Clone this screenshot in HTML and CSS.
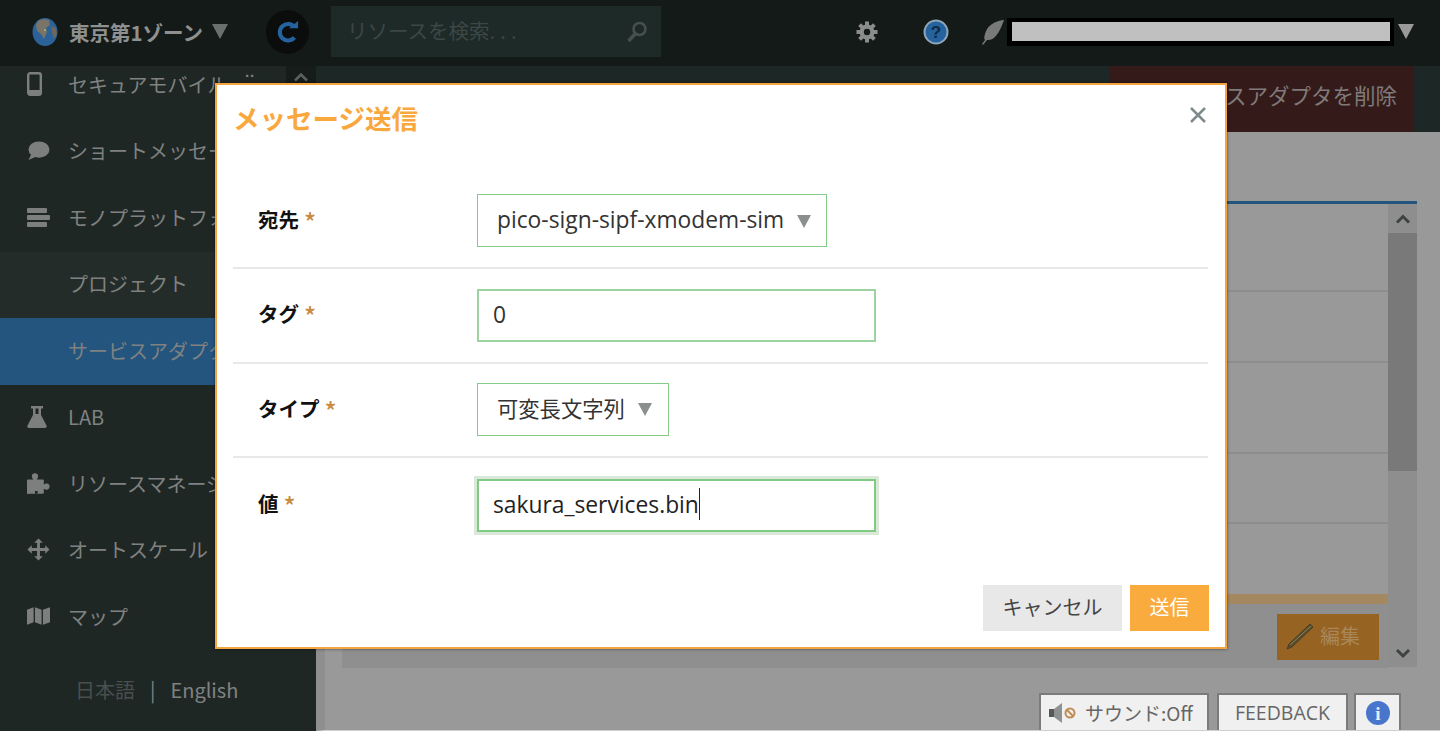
FILE: index.html
```html
<!DOCTYPE html>
<html lang="ja">
<head>
<meta charset="utf-8">
<title>メッセージ送信</title>
<link rel="stylesheet" href="styles.css">
</head>
<body>
<div class="app">
  <header class="topbar">
    <div class="zone">
      <svg class="globe" width="26" height="28" viewBox="0 0 26 28"><ellipse cx="13" cy="14" rx="12.5" ry="14" fill="#2a6299"/><path d="M6 3c3-2 8-2 11-1l1 5-4 3 1 4-3 7-3-5-4-3-1-6z" fill="#7a7468"/><path d="M19 8l5 2 1 6-3 5-2-6z" fill="#6e675c"/><circle cx="13" cy="12" r="1" fill="#9fc36a"/></svg>
      <span class="zone-name">東京第1ゾーン</span>
      <span class="caret zone-caret"></span>
    </div>
    <div class="reload">
      <svg width="22" height="24" viewBox="0 0 24 26"><path d="M19 7.5A9 9 0 1 0 19 19" fill="none" stroke="#25639e" stroke-width="4.5"/><path d="M13 9h10V1z" fill="#25639e"/></svg>
    </div>
    <div class="search">
      <span class="search-text">リソースを検索<span class="dots">...</span></span>
      <svg width="24" height="24" viewBox="0 0 24 24"><circle cx="14.5" cy="9" r="6" fill="none" stroke="#47504e" stroke-width="2.5"/><path d="M10.5 13.5 3.5 21" stroke="#47504e" stroke-width="3.5"/></svg>
    </div>
    <div class="top-right">
      <svg class="gear" width="24" height="24" viewBox="0 0 24 24"><g fill="#8b8d8c"><circle cx="12" cy="12" r="7.5"/><rect x="10" y="1.5" width="4" height="21"/><rect x="10" y="1.5" width="4" height="21" transform="rotate(45 12 12)"/><rect x="10" y="1.5" width="4" height="21" transform="rotate(90 12 12)"/><rect x="10" y="1.5" width="4" height="21" transform="rotate(135 12 12)"/></g><circle cx="12" cy="12" r="3.2" fill="#141a17"/></svg>
      <svg class="help" width="26" height="26" viewBox="0 0 26 26"><circle cx="13" cy="13" r="11.5" fill="#25639e" stroke="#8ea3b8" stroke-width="2"/><text x="13" y="19" text-anchor="middle" class="help-mark">?</text></svg>
      <svg class="feather" width="24" height="26" viewBox="0 0 24 26"><path d="M23 1C13 2 6 7 4 15c-1 3-1 5 0 6l-3 4 1 1 4-5c6 1 12-5 17-20z" fill="#777a79"/></svg>
      <div class="account"><div class="account-mask"></div></div>
      <span class="caret account-caret"></span>
    </div>
  </header>

  <div class="body">
    <nav class="sidebar">
      <div class="side-scroll"><svg width="16" height="10" viewBox="0 0 16 10"><path d="M2 8.500 8 2.500l6 6" fill="none" stroke="#5b5f5e" stroke-width="2.500"/></svg></div>
      <ul class="nav">
        <li class="nav-item"><span class="nav-icon"><svg width="15" height="24" viewBox="0 0 15 24"><rect x="1.200" y="1.200" width="12.600" height="21.600" rx="2" fill="none" stroke="#7c7f7e" stroke-width="2.400"/><rect x="1" y="18" width="13" height="5" fill="#7c7f7e"/></svg></span>セキュアモバイル<span class="nav-more">¨</span></li>
        <li class="nav-item"><span class="nav-icon"><svg width="23" height="21" viewBox="0 0 24 22"><ellipse cx="12.500" cy="10" rx="11" ry="8.500" fill="#7c7f7e"/><path d="M5 14 1.500 21l9-4z" fill="#7c7f7e"/></svg></span>ショートメッセージ</li>
        <li class="nav-item"><span class="nav-icon"><svg width="23" height="21" viewBox="0 0 23 21"><g fill="#7c7f7e"><rect x="0" y="1" width="20" height="5" rx="1"/><rect x="0" y="8" width="23" height="5" rx="1"/><rect x="0" y="15" width="20" height="5" rx="1"/></g></svg></span>モノプラットフォーム</li>
        <li class="nav-item is-open"><span class="nav-icon"></span>プロジェクト</li>
        <li class="nav-item is-active"><span class="nav-icon"></span>サービスアダプタ</li>
        <li class="nav-item"><span class="nav-icon"><svg width="20" height="24" viewBox="0 0 20 24"><path d="M4 1h12v2.500h-2V10l5.500 10.500c.6 1.500 0 2.500-1.500 2.500H2c-1.500 0-2.100-1-1.500-2.500L6 10V3.500H4z" fill="#7c7f7e"/><path d="M8.500 3.500h3V9h-3z" fill="#1f2725"/></svg></span>LAB</li>
        <li class="nav-item"><span class="nav-icon"><svg width="26" height="23" viewBox="0 0 26 23"><g fill="#7c7f7e"><rect x="0" y="7" width="19" height="16" rx="1"/><circle cx="9" cy="3.500" r="3.500"/><rect x="7" y="4" width="4" height="4"/><circle cx="22" cy="15" r="3.500"/><rect x="18" y="13" width="4" height="4"/></g><rect x="0" y="19" width="3" height="4" fill="#7c7f7e"/><rect x="9" y="20" width="3" height="3" fill="#1f2725"/></svg></span>リソースマネージャー</li>
        <li class="nav-item"><span class="nav-icon"><svg width="23" height="23" viewBox="0 0 24 24"><path d="M12 .5l4.500 4.500h-3v5.500H19V7.500l4.500 4.500-4.500 4.500v-3h-5.500V19h3L12 23.500 7.500 19h3v-5.500H5v3L.5 12 5 7.500v3h5.500V5h-3z" fill="#7c7f7e"/></svg></span>オートスケール</li>
        <li class="nav-item"><span class="nav-icon"><svg width="26" height="22" viewBox="0 0 26 22"><path d="M0 4l7.500-3v17L0 21zM9 1l7.500 3v17L9 18zM18 4l8-3v17l-8 3z" fill="#7c7f7e"/></svg></span>マップ</li>
      </ul>
      <div class="lang"><span class="lang-off">日本語</span><span class="lang-sep">|</span><span>English</span></div>
    </nav>

    <main class="main">
      <div class="action-strip"><button class="danger" type="button">サービスアダプタを削除</button></div>
      <section class="panel">
        <div class="panel-col">
          <div class="rows">
            <div class="row r1"></div>
            <div class="row r2"></div>
            <div class="row r3"></div>
            <div class="row r4"></div>
            <div class="row r5"></div>
          </div>
          <div class="panel-foot">
            <button class="edit" type="button"><svg width="28" height="28" viewBox="0 0 28 28"><path d="M24 2l3 3L6 25l-5 2 2-5z" fill="#5e4a2a" stroke="#3c372c" stroke-width=".8"/><path d="M4 23 25 4" stroke="#7d8a52" stroke-width="1"/></svg><span>編集</span></button>
          </div>
        </div>
        <div class="panel-scroll">
          <svg class="sb-arrow" width="16" height="12" viewBox="0 0 16 12"><path d="M2 10l6-6 6 6" fill="none" stroke="#3e4241" stroke-width="3"/></svg>
          <div class="sb-thumb"></div>
          <div class="sb-rest"></div>
          <svg class="sb-arrow down" width="16" height="12" viewBox="0 0 16 12"><path d="M2 2l6 6 6-6" fill="none" stroke="#3e4241" stroke-width="3"/></svg>
        </div>
      </section>
      <div class="tools">
        <button class="tool sound" type="button"><svg width="28" height="24" viewBox="0 0 28 24"><path d="M1 8h5l8-6v20l-8-6H1z" fill="#8d9191"/><rect x="1" y="8" width="5" height="8" fill="#55595a"/><circle cx="22" cy="12" r="4.500" fill="none" stroke="#c08c55" stroke-width="2"/><path d="M19 9l6 6" stroke="#c08c55" stroke-width="2"/></svg><span>サウンド:Off</span></button>
        <button class="tool feedback" type="button">FEEDBACK</button>
        <button class="tool info" type="button"><svg width="24" height="24" viewBox="0 0 24 24"><circle cx="12" cy="12" r="12" fill="#4876cc"/><text x="12" y="19" text-anchor="middle" class="info-mark">i</text></svg></button>
      </div>
    </main>
  </div>

  <div class="modal" role="dialog">
    <div class="modal-head">
      <h2 class="modal-title">メッセージ送信</h2>
      <svg class="close" width="18" height="18" viewBox="0 0 18 18"><path d="M2 2l14 14M16 2 2 16" stroke="#7f8a8c" stroke-width="2.500"/></svg>
    </div>
    <form class="form">
      <div class="form-row">
        <div class="label">宛先<i>*</i></div>
        <div class="field select s1"><span>pico-sign-sipf-xmodem-sim</span><b class="sel-caret"></b></div>
      </div>
      <div class="form-row">
        <div class="label">タグ<i>*</i></div>
        <div class="field input">0</div>
      </div>
      <div class="form-row">
        <div class="label">タイプ<i>*</i></div>
        <div class="field select s2"><span>可変長文字列</span><b class="sel-caret"></b></div>
      </div>
      <div class="form-row last">
        <div class="label">値<i>*</i></div>
        <div class="field input focus"><span>sakura_services.bin</span><b class="cursor"></b></div>
      </div>
    </form>
    <div class="modal-foot">
      <button class="btn cancel" type="button">キャンセル</button>
      <button class="btn send" type="button">送信</button>
    </div>
  </div>
</div>
</body>
</html>
```
FILE: styles.css
```css
* { box-sizing: border-box; }
html, body { margin: 0; padding: 0; }
body {
  width: 1440px;
  height: 731px;
  overflow: hidden;
  font-family: "Noto Sans CJK JP", "Noto Sans", sans-serif;
  background: #999;
}
button { font-family: inherit; border: 0; padding: 0; }
ul { list-style: none; margin: 0; padding: 0; }

.app { position: relative; width: 1440px; height: 731px; display: flex; flex-direction: column; overflow: hidden; }

/* top bar */
.topbar { height: 66px; flex: none; background: #141a17; display: flex; align-items: center; padding: 0 0 3px 32px; }
.zone { display: flex; align-items: center; width: 234px; flex: none; }
.zone-name { margin-left: 11px; font-size: 20.500px; font-weight: 700; color: #8f9190; white-space: nowrap; }
.caret { display: block; width: 0; height: 0; border-left: 8px solid transparent; border-right: 8px solid transparent; border-top: 15px solid #6b6f6d; }
.zone-caret { margin-left: 9px; }
.reload { width: 43px; height: 44px; border-radius: 50%; background: #0b0d0c; display: flex; align-items: center; justify-content: center; flex: none; }
.search { width: 330px; height: 51px; margin-left: 22px; flex: none; background: #1e2a28; display: flex; align-items: center; justify-content: space-between; padding: 0 12px 0 16px; }
.search-text { font-size: 20.500px; color: #3c4745; white-space: nowrap; padding-bottom: 3px; }
.dots { letter-spacing: 5px; }
.top-right { display: flex; align-items: center; margin-left: 194px; }
.help { margin-left: 44px; }
.help-mark { font: 700 17px "Liberation Sans", sans-serif; fill: #0f2a44; }
.feather { margin-left: 32px; }
.account { width: 387px; height: 28px; margin-left: 2px; background: #000; padding: 4px 4px 5px 5px; }
.account-mask { height: 100%; background: #c0c0c0; }
.account-caret { margin-left: 4px; border-top-color: #9a9a9a; }

/* layout */
.body { flex: 1; display: flex; min-height: 0; }

/* sidebar */
.sidebar { position: relative; width: 316px; flex: none; background: #1f2725; display: flex; flex-direction: column; overflow: hidden; }
.side-scroll { position: absolute; top: 0; right: 0; width: 30px; height: 40px; background: #161c1a; display: flex; justify-content: center; padding-top: 6px; }
.nav { margin-top: -14px; }
.nav-item { height: 66.500px; display: flex; align-items: center; padding: 0 0 2px 26px; font-size: 20px; color: #7f8281; white-space: nowrap; overflow: hidden; }
.nav-icon { width: 23px; margin: 0 18px 0 1px; flex: none; display: flex; justify-content: flex-start; }
.nav-more { margin-left: 18px; font-size: 26px; font-family: "Liberation Sans", sans-serif; line-height: 1; }
.is-open { background: #242c2a; }
.is-active { background: #24557f; }
.lang { margin-top: 25px; padding-left: 75px; font-size: 20px; color: #7f8281; display: flex; align-items: center; line-height: 28px; }
.lang-off { color: #494f4e; }
.lang-sep { margin: 0 15px; }

/* main */
.main { flex: 1; min-width: 0; display: flex; flex-direction: column; background: #999; border-left: 9px solid #8f8f8f; border-bottom: 1px solid #cfcfcf; }
.action-strip { height: 66px; flex: none; margin-left: -9px; background: #1d2826; display: flex; justify-content: flex-end; padding-right: 26px; }
.danger { width: 305px; height: 66px; background: #351a1a; color: #7f7b7a; font-size: 21.500px; text-align: right; padding: 0 17px 10px 0; white-space: nowrap; overflow: hidden; }
.panel { height: 466px; margin: 69px 23px 0 17px; flex: none; display: flex; border-top: 3px solid #24557f; }
.panel-col { flex: 1; min-width: 0; display: flex; flex-direction: column; }
.rows { flex: 1; display: flex; flex-direction: column; }
.row { border-bottom: 2px solid #8d8d8d; }
.r1 { height: 88px; }
.r2 { height: 71px; }
.r3 { height: 91px; }
.r4 { height: 70px; }
.r5 { height: 70px; border-bottom: 0; background: #999; }
.panel-foot { height: 74px; flex: none; background: #8f8f8f; border-top: 10px solid #a38860; display: flex; justify-content: flex-end; padding: 10px 9px 0 0; }
.edit { width: 102px; height: 46px; background: #966322; color: #a9875a; font-size: 20px; display: flex; align-items: center; gap: 6px; padding: 0 0 3px 9px; }
.panel-scroll { width: 29px; flex: none; background: #8e8e8e; display: flex; flex-direction: column; align-items: center; }
.sb-arrow { height: 29px; flex: none; }
.sb-thumb { width: 100%; height: 238px; background: #797979; flex: none; }
.sb-rest { flex: 1; }
.sb-arrow.down { height: 26px; }

/* bottom tools */
.tools { height: 37px; margin-top: 26px; flex: none; display: flex; justify-content: flex-end; gap: 8px; padding-right: 39px; }
.tool { background: #f0f0f0; border: 2px solid #7b7b7b; border-bottom: 0; color: #666; font-size: 19px; display: flex; align-items: center; justify-content: center; white-space: nowrap; }
.sound { width: 170px; gap: 9px; justify-content: flex-start; padding-left: 7px; }
.feedback { width: 131px; font-family: "Open Sans", sans-serif; font-size: 19.500px; }
.info { width: 47px; margin-left: -2px; }
.info-mark { font: 700 19px "Liberation Serif", serif; fill: #e8eefc; }

/* modal */
.modal { position: absolute; left: 215px; top: 83px; width: 1012px; height: 566px; background: #fff; border: 2px solid #f5a540; padding: 0 17px 0 16px; display: flex; flex-direction: column; box-shadow: 0 0 3px rgba(0,0,0,.5); }
.modal-head { height: 89.500px; flex: none; display: flex; align-items: flex-start; justify-content: space-between; padding-top: 14px; }
.modal-title { margin: 0; font-size: 26.500px; line-height: 38px; font-weight: 700; color: #f9a83d; }
.close { margin: 7px 1px 0 0; }
.form-row { height: 94.500px; display: flex; align-items: center; border-bottom: 2px solid #e8e8e8; padding-left: 25px; }
.form-row.last { border-bottom: 0; }
.label { width: 219px; flex: none; display: flex; align-items: center; padding-bottom: 4px; font-size: 20.500px; font-weight: 700; color: #111; white-space: nowrap; }
.label i { font-style: normal; font-size: 25px; line-height: 20px; font-weight: 500; color: #c98c3f; margin-left: 5px; padding-top: 4px; }
.field { height: 53px; border: 1px solid #84cb88; display: flex; align-items: center; padding-bottom: 2px; font-family: "Open Sans", "Noto Sans CJK JP", sans-serif; font-size: 22.800px; color: #333; white-space: nowrap; }
.input { width: 399px; padding-left: 14px; border: 2px solid #9dd3a0; }
.select { padding-left: 19px; }
.s1 { width: 350px; }
.s2 { width: 192px; padding-bottom: 4px; font-family: "Noto Sans CJK JP", sans-serif; font-size: 21.300px; }
.sel-caret { width: 0; height: 0; margin: 3px 0 0 13px; border-left: 7px solid transparent; border-right: 7px solid transparent; border-top: 13px solid #8b8f8e; }
.input.focus { box-shadow: 0 0 0 3px #d9e8d9; color: #222; border-color: #7fcb83; }
.cursor { width: 1.500px; height: 32px; background: #222; }
.modal-foot { display: flex; justify-content: flex-end; gap: 8px; margin: 32.500px -1px 0 0; }
.btn { height: 46px; padding-bottom: 3px; font-size: 20px; }
.cancel { width: 139px; background: #e8e8e8; color: #444; }
.send { width: 79px; background: #f9ab3e; color: #fff; }
```
